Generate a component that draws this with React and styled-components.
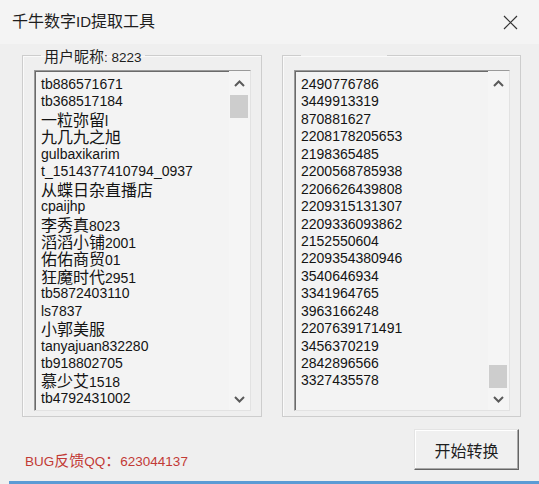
import React from "react";
import styled, { createGlobalStyle } from "styled-components";

const GlobalStyle = createGlobalStyle`
  html, body {
    margin: 0;
    padding: 0;
    background: #efefef;
  }
  * {
    box-sizing: border-box;
  }
`;

const users = [
  "tb886571671",
  "tb368517184",
  "一粒弥留l",
  "九几九之旭",
  "gulbaxikarim",
  "t_1514377410794_0937",
  "从蝶日杂直播店",
  "cpaijhp",
  "李秀真8023",
  "滔滔小铺2001",
  "佑佑商贸01",
  "狂魔时代2951",
  "tb5872403110",
  "ls7837",
  "小郭美服",
  "tanyajuan832280",
  "tb918802705",
  "慕少艾1518",
  "tb4792431002",
];

const ids = [
  "2490776786",
  "3449913319",
  "870881627",
  "2208178205653",
  "2198365485",
  "2200568785938",
  "2206626439808",
  "2209315131307",
  "2209336093862",
  "2152550604",
  "2209354380946",
  "3540646934",
  "3341964765",
  "3963166248",
  "2207639171491",
  "3456370219",
  "2842896566",
  "3327435578",
];

// CJK runs are drawn a little larger than the latin text, as in the dialog
const CJK_RUN = /([\u3000-\u9fff\uff00-\uffef]+)/;

const withCjk = (text, size) =>
  text
    .split(CJK_RUN)
    .filter(Boolean)
    .map((part, index) =>
      CJK_RUN.test(part) ? (
        <Cjk key={index} $size={size}>
          {part}
        </Cjk>
      ) : (
        <span key={index}>{part}</span>
      )
    );

const Chevron = ({ up }) => (
  <svg width="11" height="7" viewBox="0 0 11 7">
    <polyline
      points={up ? "1,6 5.5,1.5 10,6" : "1,1 5.5,5.5 10,1"}
      fill="none"
      stroke="#5a5a5a"
      strokeWidth="2"
    />
  </svg>
);

const ListBox = ({ items, thumbAtEnd }) => (
  <Box>
    <Items>
      {items.map((item, index) => (
        <Item key={index}>{withCjk(item, 16)}</Item>
      ))}
    </Items>
    <ScrollBar>
      <Arrow>
        <Chevron up />
      </Arrow>
      <Track>
        <Thumb $atEnd={thumbAtEnd} />
      </Track>
      <Arrow>
        <Chevron />
      </Arrow>
    </ScrollBar>
  </Box>
);

const App = () => {
  return (
    <Window>
      <GlobalStyle />
      <TitleBar>
        <Title>{withCjk("千牛数字ID提取工具", 16)}</Title>
        <Close>
          <svg width="15" height="15" viewBox="0 0 15 15">
            <path d="M1 1 L14 14 M14 1 L1 14" stroke="#333" strokeWidth="1.2" />
          </svg>
        </Close>
      </TitleBar>

      <Groups>
        <Group $width={240}>
          <Legend>{withCjk("用户昵称: 8223", 15)}</Legend>
          <ListBox items={users} />
        </Group>
        <Group $width={239}>
          <Legend $blank={86} />
          <ListBox items={ids} thumbAtEnd />
        </Group>
      </Groups>

      <Footer>
        <BugNote>{withCjk("BUG反馈QQ：623044137", 15)}</BugNote>
        <StartButton type="button">开始转换</StartButton>
      </Footer>
      <AccentLine />
    </Window>
  );
};

const Window = styled.div`
  width: 539px;
  height: 484px;
  display: flex;
  flex-direction: column;
  background: #efefef;
  font-family: "Liberation Sans", "Noto Sans CJK SC", sans-serif;
  color: #1a1a1a;
  overflow: hidden;
`;

const Cjk = styled.span`
  display: inline-block;
  height: 17px;
  line-height: 17px;
  vertical-align: baseline;
  font-family: "Noto Sans CJK SC", sans-serif;
  font-size: ${({ $size }) => $size}px;
`;

const TitleBar = styled.div`
  height: 44px;
  display: flex;
  align-items: center;
  justify-content: space-between;
  padding: 0 21px 0 12px;
  background: #f4f4f4;
`;

const Title = styled.div`
  font-size: 15px;
  color: #1e1e1e;
  line-height: 20px;
`;

const Close = styled.div`
  display: flex;
  align-items: center;
`;

const Groups = styled.div`
  display: flex;
  gap: 20px;
  padding: 3px 0 0 22px;
`;

const Group = styled.fieldset`
  width: ${({ $width }) => $width}px;
  margin: 0;
  padding: 7px 10px 5px 11px;
  border: 1px solid #cdcdcd;
  box-shadow: inset 1px 1px 0 #fafafa;
`;

const Legend = styled.legend`
  margin-left: 7px;
  padding: 0 3px;
  height: 16px;
  width: ${({ $blank }) => ($blank ? `${$blank}px` : "auto")};
  font-size: 13.5px;
  line-height: 16px;
  color: #1e1e1e;
`;

const Box = styled.div`
  height: 341px;
  display: flex;
  background: #f3f3f3;
  border-top: 1px solid #9a9a9a;
  border-left: 1px solid #9a9a9a;
  border-right: 1px solid #e2e2e2;
  border-bottom: 1px solid #e2e2e2;
  box-shadow: inset 1px 1px 0 #6a6a6a;
`;

const Items = styled.div`
  flex: 1;
  padding: 5px 0 0 6px;
  overflow: hidden;
`;

const Item = styled.div`
  height: 17.45px;
  line-height: 17.45px;
  font-size: 14px;
  white-space: nowrap;
  color: #141414;
`;

const ScrollBar = styled.div`
  width: 21px;
  display: flex;
  flex-direction: column;
  padding: 1px 1px 0 0;
  background: #f5f5f5;
`;

const Arrow = styled.div`
  height: 22px;
  display: flex;
  align-items: center;
  justify-content: center;
`;

const Track = styled.div`
  flex: 1;
  display: flex;
  flex-direction: column;
`;

const Thumb = styled.div`
  height: 23px;
  margin: ${({ $atEnd }) => ($atEnd ? "auto 1px 0 1px" : "1px 1px 0 1px")};
  background: #cdcdcd;
`;

const Footer = styled.div`
  flex: 1;
  display: flex;
  align-items: flex-start;
  justify-content: space-between;
  padding: 12px 20px 0 25px;
`;

const BugNote = styled.div`
  margin-top: 22px;
  font-size: 13.5px;
  line-height: 18px;
  color: #c23a36;
`;

const StartButton = styled.button`
  width: 105px;
  height: 41px;
  padding: 0;
  font-family: "Noto Sans CJK SC", sans-serif;
  font-size: 16px;
  color: #1e1e1e;
  background: #f0f0f0;
  border: 1px solid;
  border-color: #e4e4e4 #646464 #646464 #e4e4e4;
  box-shadow: inset -1px -1px 0 #a8a8a8, inset 1px 1px 0 #ffffff;
`;

const AccentLine = styled.div`
  height: 3px;
  margin-left: 9px;
  background: #5b9bd5;
`;

export default App;
